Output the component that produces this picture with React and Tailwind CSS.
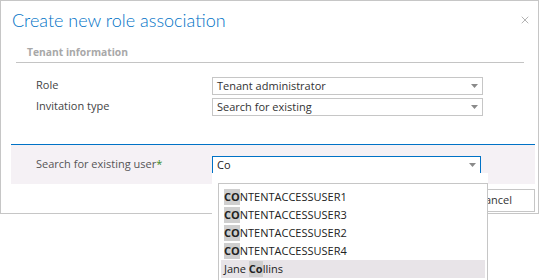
import { X } from 'lucide-react'

const ITEMS = [
  { bold: 'CO', rest: 'NTENTACCESSUSER1' },
  { bold: 'CO', rest: 'NTENTACCESSUSER3' },
  { bold: 'CO', rest: 'NTENTACCESSUSER2' },
  { bold: 'CO', rest: 'NTENTACCESSUSER4' },
]

function Arrow() {
  return (
    <svg width="7" height="4" viewBox="0 0 7 4" className="shrink-0">
      <path d="M0 0h7L3.5 4z" fill="#8a8a8a" />
    </svg>
  )
}

function Select({ value, focused }) {
  return (
    <div
      className={
        focused
          ? 'flex h-[18px] w-[269px] items-center justify-between border border-[#0072c6] bg-white pl-[4px] pr-[4px] text-[#222]'
          : 'flex h-[18px] w-[271px] items-center justify-between border border-[#c6c6c6] bg-white pl-[4px] pr-[4px] text-[#333]'
      }
    >
      <span className="leading-[16px]">{value}</span>
      <Arrow />
    </div>
  )
}

export default function App() {
  return (
    <div className="relative h-[280px] w-[540px] overflow-hidden bg-white text-[11px] font-['Open_Sans',sans-serif]">
      <div className="flex h-[214px] w-[539px] flex-col border border-[#c6c6c6] bg-white">
        <div className="mt-[7px] flex items-center justify-between pl-[11px] pr-[7px]">
          <h1 className="text-[18px] font-light leading-[24px] text-[#0072c6] font-['Lato',sans-serif]">Create new role association</h1>
          <X size={12} strokeWidth={1.5} className="text-[#9a9a9a]" />
        </div>

        <div className="ml-[15px] mr-[14px] mt-[12px] border-b border-[#c4c4c4] pb-[1px] pl-[11px]">
          <span className="text-[10.3px] font-bold leading-[14px] text-[#a8a8a8]">Tenant information</span>
        </div>

        <div className="mt-[14px] flex flex-col gap-[3px]">
          <div className="flex items-center">
            <span className="w-[211px] pl-[35px] text-[#444]">Role</span>
            <Select value="Tenant administrator" />
          </div>
          <div className="flex items-center">
            <span className="w-[211px] pl-[35px] text-[#444]">Invitation type</span>
            <Select value="Search for existing" />
          </div>
        </div>

        <div className="ml-[10px] mr-[3px] mt-[28px] flex items-center border-t border-[#0072c6] bg-[#f5f1f5] pb-[10px] pt-[11px]">
          <span className="w-[201px] pl-[25px] text-[#555]">
            Search for existing user<span className="text-[#3a8a1e]">*</span>
          </span>
          <Select value="Co" focused />
        </div>

        <div className="mr-[3px] mt-[5px] flex justify-end">
          <button className="h-[23px] w-[76px] border border-[#c6c6c6] bg-white pr-[4px] text-[#333]">Cancel</button>
        </div>
      </div>

      <div className="absolute left-[212px] top-[213px] bottom-0 w-px bg-[#c6c6c6]" />

      <div className="absolute left-[212px] top-[173px] bottom-0 w-[276px] bg-white pl-[6px] pt-[10px]">
        <div className="h-[98px] border border-[#c6c6c6] bg-white pl-[2px] pr-[2px] pt-[4px]">
          {ITEMS.map((item) => (
            <div key={item.rest} className="flex h-[18px] items-center pl-[3px] text-[#222]">
              <span className="bg-[#cfcfcf] font-bold">{item.bold}</span>
              <span>{item.rest}</span>
            </div>
          ))}
          <div className="flex h-[18px] items-center bg-[#e8e4e8] pl-[3px] text-[#222]">
            <span>Jane&nbsp;</span>
            <span className="bg-[#cfcfcf] font-bold">Co</span>
            <span>llins</span>
          </div>
        </div>
      </div>
    </div>
  )
}
